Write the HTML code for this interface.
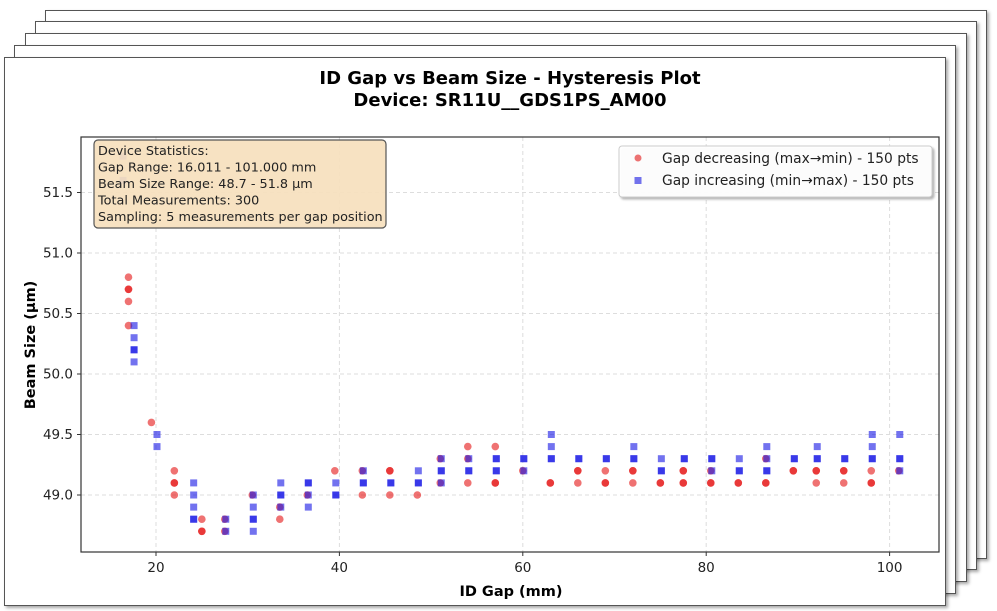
<!DOCTYPE html>
<html><head><meta charset="utf-8"><style>
body{margin:0;width:997px;height:611px;background:#fff;position:relative;overflow:hidden;font-family:"DejaVu Sans","Liberation Sans",sans-serif}
.pg{position:absolute;width:940px;height:547px;background:#fff;border:1.5px solid #555;box-shadow:2px 2px 3px rgba(0,0,0,.35)}
</style></head><body>
<div class="pg" style="left:45px;top:10px"></div>
<div class="pg" style="left:35px;top:21px"></div>
<div class="pg" style="left:25px;top:33px"></div>
<div class="pg" style="left:14px;top:45px"></div>
<div class="pg" style="left:4px;top:57px"></div>
<svg id="s" width="997" height="611" style="position:absolute;left:0;top:0" xmlns="http://www.w3.org/2000/svg" font-family="DejaVu Sans, Liberation Sans, sans-serif">
<text x="510" y="84" font-size="18" font-weight="bold" text-anchor="middle" fill="#000">ID Gap vs Beam Size - Hysteresis Plot</text>
<text x="510" y="106" font-size="18" font-weight="bold" text-anchor="middle" fill="#000">Device: SR11U__GDS1PS_AM00</text>
<g id="grid" stroke="#ddd" stroke-dasharray="4,3" stroke-width="1"></g>
<g id="pts"></g>
<rect x="81" y="137" width="858" height="415" fill="none" stroke="#333" stroke-width="1.2"/>
<g id="ticks" font-size="13.5" fill="#222"></g>
<text x="511" y="596" font-size="14.5" font-weight="bold" text-anchor="middle">ID Gap (mm)</text>
<text transform="translate(35,345) rotate(-90)" font-size="14.5" font-weight="bold" text-anchor="middle">Beam Size (μm)</text>
<rect x="94" y="140" width="292" height="88" rx="4" fill="#f6e0bd" fill-opacity="0.92" stroke="#555" stroke-width="1.2"/>
<g font-size="12.8" fill="#222">
<text x="98" y="155">Device Statistics:</text>
<text x="98" y="171.5">Gap Range: 16.011 - 101.000 mm</text>
<text x="98" y="188">Beam Size Range: 48.7 - 51.8 μm</text>
<text x="98" y="204.5">Total Measurements: 300</text>
<text x="98" y="221">Sampling: 5 measurements per gap position</text>
</g>
<rect x="619" y="146" width="313" height="51" rx="3" fill="#fff" fill-opacity="0.95" stroke="#ccc" style="filter:drop-shadow(2px 2px 1px rgba(0,0,0,.3))"/>
<circle cx="638" cy="158" r="3.5" fill="rgba(228,40,40,0.65)"/>
<rect x="634.5" y="177" width="7" height="7" fill="rgba(40,40,228,0.65)"/>
<g font-size="13.8" fill="#222">
<text x="662" y="163">Gap decreasing (max→min) - 150 pts</text>
<text x="662" y="185">Gap increasing (min→max) - 150 pts</text>
</g>
</svg>
<script>
var NS="http://www.w3.org/2000/svg";
function X(g){return 156+(g-20)*9.17}
function Y(v){return 495-(v-49)*121}
function el(p,t,a){var e=document.createElementNS(NS,t);for(var k in a)e.setAttribute(k,a[k]);document.getElementById(p).appendChild(e);return e}
[20,40,60,80,100].forEach(function(g){el('grid','line',{x1:X(g),x2:X(g),y1:137,y2:552});el('ticks','line',{x1:X(g),x2:X(g),y1:552,y2:556,stroke:'#333'});var t=el('ticks','text',{x:X(g),y:572,'text-anchor':'middle'});t.textContent=g});
[49,49.5,50,50.5,51,51.5].forEach(function(v){el('grid','line',{x1:81,x2:939,y1:Y(v),y2:Y(v)});el('ticks','line',{x1:77,x2:81,y1:Y(v),y2:Y(v),stroke:'#333'});var t=el('ticks','text',{x:73,y:Y(v)+4.5,'text-anchor':'end'});t.textContent=v.toFixed(1)});
var D=[[16.3,[],[51.8,51.6]],[17.0,[50.8,50.7,50.7,50.6,50.4],[]],[17.5,[],[50.4,50.3,50.2,50.2,50.1]],
[19.5,[49.6],[]],[20,[],[49.5,49.4]],[22,[49.2,49.1,49.1,49.0],[]],[24,[],[49.1,49.0,48.9,48.8,48.8]],
[25,[48.8,48.7,48.7],[]],[27.5,[48.8,48.7],[48.8,48.7]],[30.5,[49.0],[49.0,48.9,48.8,48.8,48.7]],
[33.5,[48.9,48.8],[49.1,49.0,49.0,48.9]],[36.5,[49.0],[49.1,49.1,49.0,48.9]],[39.5,[49.2],[49.1,49.0,49.0]],
[42.5,[49.2,49.0],[49.2,49.1,49.1]],[45.5,[49.2,49.2,49.0],[49.1,49.1]],[48.5,[49.0],[49.2,49.1,49.1]],
[51,[49.3,49.1],[49.3,49.2,49.2,49.1]],[54,[49.4,49.3,49.1],[49.3,49.2,49.2]],[57,[49.4,49.1,49.1],[49.3,49.3,49.2,49.2]],
[60,[49.2],[49.3,49.3,49.2]],[63,[49.1,49.1],[49.5,49.4,49.3,49.3]],[66,[49.2,49.2,49.1],[49.3,49.3]],
[69,[49.2,49.1,49.1],[49.3,49.3]],[72,[49.2,49.2,49.1],[49.4,49.3,49.3]],[75,[49.1,49.1],[49.3,49.2,49.2]],
[77.5,[49.2,49.2,49.1,49.1],[49.3,49.3]],[80.5,[49.2,49.1,49.1],[49.3,49.3,49.2]],[83.5,[49.1,49.1],[49.3,49.2,49.2]],
[86.5,[49.3,49.1,49.1],[49.4,49.3,49.2,49.2]],[89.5,[49.2,49.2],[49.3,49.3]],[92,[49.2,49.2,49.1],[49.4,49.3,49.3]],
[95,[49.2,49.2,49.1],[49.3,49.3]],[98,[49.2,49.1,49.1],[49.5,49.4,49.3,49.3]],[101,[49.2],[49.5,49.3,49.3,49.2]]];
D.forEach(function(d){d[1].forEach(function(v){el('pts','circle',{cx:X(d[0]),cy:Y(v),r:3.8,fill:'rgba(228,20,20,0.6)'})});
d[2].forEach(function(v){el('pts','rect',{x:X(d[0])+1-3.5,y:Y(v)-3.5,width:7,height:7,fill:'rgba(20,20,228,0.6)'})});});
</script>
</body></html>
